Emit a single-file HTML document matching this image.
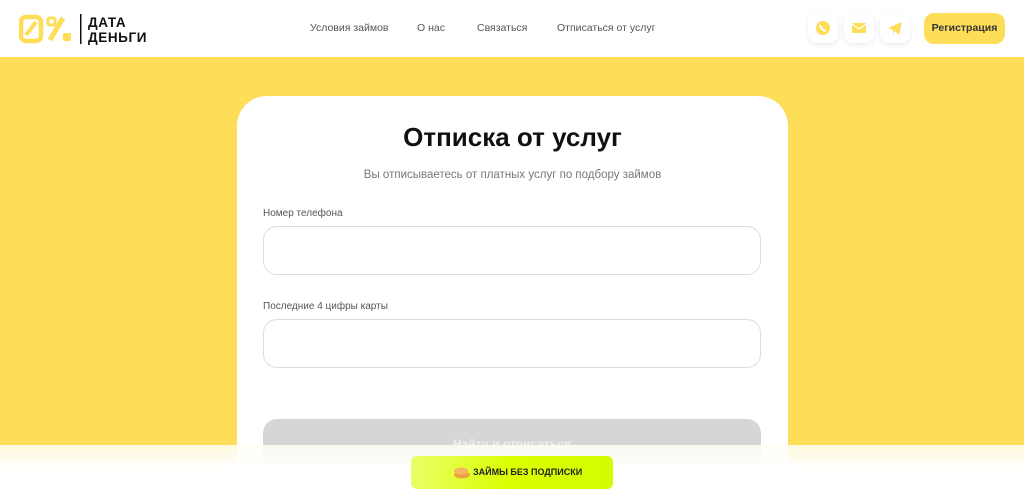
<!DOCTYPE html>
<html><head><meta charset="utf-8"><style>
*{box-sizing:border-box;margin:0;padding:0}
html,body{width:1024px;height:500px;overflow:hidden}
body{background:#fedd59;font-family:"Liberation Sans",sans-serif;position:relative}
.hdr{position:absolute;left:0;top:0;width:1024px;height:57px;background:#fff}
.logo{position:absolute;left:19px;top:13px}
.nav{position:absolute;top:22px;font-size:10.5px;color:#555}
.ib{position:absolute;top:13px;width:30px;height:30px;border-radius:9px;background:#fff;box-shadow:0 2px 6px rgba(0,0,0,.08)}
.reg{position:absolute;left:924px;top:13px;width:81px;height:31px;border-radius:10px;background:#fedd59;font-size:10.5px;font-weight:bold;color:#333;text-align:center;line-height:31px}
.card{position:absolute;left:237px;top:96px;width:551px;height:420px;background:#fff;border-radius:30px}
h1{position:absolute;left:0;width:551px;top:26px;text-align:center;font-size:26px;font-weight:bold;color:#111}
.sub{position:absolute;left:0;width:551px;top:73px;text-align:center;font-size:11.5px;color:#777}
.lbl{position:absolute;left:26px;font-size:10px;color:#555}
.inp{position:absolute;left:26px;width:498px;height:49px;border:1px solid #ddd;border-radius:14px}
.btn{position:absolute;left:26px;top:323px;width:498px;height:50px;border-radius:14px;background:#d6d6d6;color:#eee;text-align:center;font-size:12px;font-weight:bold;line-height:50px}
.bar{position:absolute;left:0;top:445px;width:1024px;height:55px;background:linear-gradient(rgba(255,253,245,.85),#fff 45%)}
.lb{position:absolute;left:411px;top:456px;width:202px;height:33px;border-radius:6px;background:linear-gradient(100deg,#eaff6a,#d9ff00 50%,#d4fb00);font-size:9px;font-weight:bold;color:#222;line-height:33px;padding-left:62px}
</style></head><body>
<div class="hdr">
<svg class="logo" width="140" height="32" viewBox="0 0 140 32">
<rect x="2" y="4" width="20" height="24" rx="5" fill="none" stroke="#fedd59" stroke-width="4.5"/>
<path d="M7 22 L17 9" stroke="#fedd59" stroke-width="4"/>
<rect x="29" y="5" width="7" height="7" rx="1.5" fill="none" stroke="#fedd59" stroke-width="3"/>
<path d="M31 27 L44 5" stroke="#fedd59" stroke-width="5"/>
<rect x="44" y="20" width="8" height="8" rx="1.5" fill="#fedd59"/>
<rect x="61" y="1" width="1.5" height="30" fill="#111"/>
<text x="69" y="14" font-family="Liberation Sans" font-weight="bold" font-size="13.5" letter-spacing="0.6" fill="#111">ДАТА</text>
<text x="69" y="29" font-family="Liberation Sans" font-weight="bold" font-size="13.5" letter-spacing="0.6" fill="#111">ДЕНЬГИ</text>
</svg>
<div class="nav" style="left:310px">Условия займов</div>
<div class="nav" style="left:417px">О нас</div>
<div class="nav" style="left:477px">Связаться</div>
<div class="nav" style="left:557px">Отписаться от услуг</div>
<div class="ib" style="left:808px"><svg width="30" height="30"><circle cx="15" cy="15" r="7" fill="#fedd59"/><path d="M12 12q1 5 6 6" stroke="#fff" stroke-width="2" fill="none"/></svg></div>
<div class="ib" style="left:844px"><svg width="30" height="30"><rect x="8" y="10" width="14" height="10" rx="1.5" fill="#fedd59"/><path d="M8 11l7 5 7-5" stroke="#fff" stroke-width="1.3" fill="none"/></svg></div>
<div class="ib" style="left:880px"><svg width="30" height="30"><path d="M8 15l14-6-3 13-4-4-2 3v-4z" fill="#fedd59"/></svg></div>
<div class="reg">Регистрация</div>
</div>
<div class="card">
<h1>Отписка от услуг</h1>
<div class="sub">Вы отписываетесь от платных услуг по подбору займов</div>
<div class="lbl" style="top:112px">Номер телефона</div>
<div class="inp" style="top:130px"></div>
<div class="lbl" style="top:205px">Последние 4 цифры карты</div>
<div class="inp" style="top:223px"></div>
<div class="btn">Найти и отписаться</div>
</div>
<div class="bar"></div>
<div class="lb"><svg style="position:absolute;left:42px;top:9px" width="18" height="14"><ellipse cx="9" cy="10" rx="8" ry="3.5" fill="#f0a040"/><ellipse cx="8" cy="6" rx="7" ry="3.5" fill="#f5b860"/></svg>ЗАЙМЫ БЕЗ ПОДПИСКИ</div>
</body></html>
